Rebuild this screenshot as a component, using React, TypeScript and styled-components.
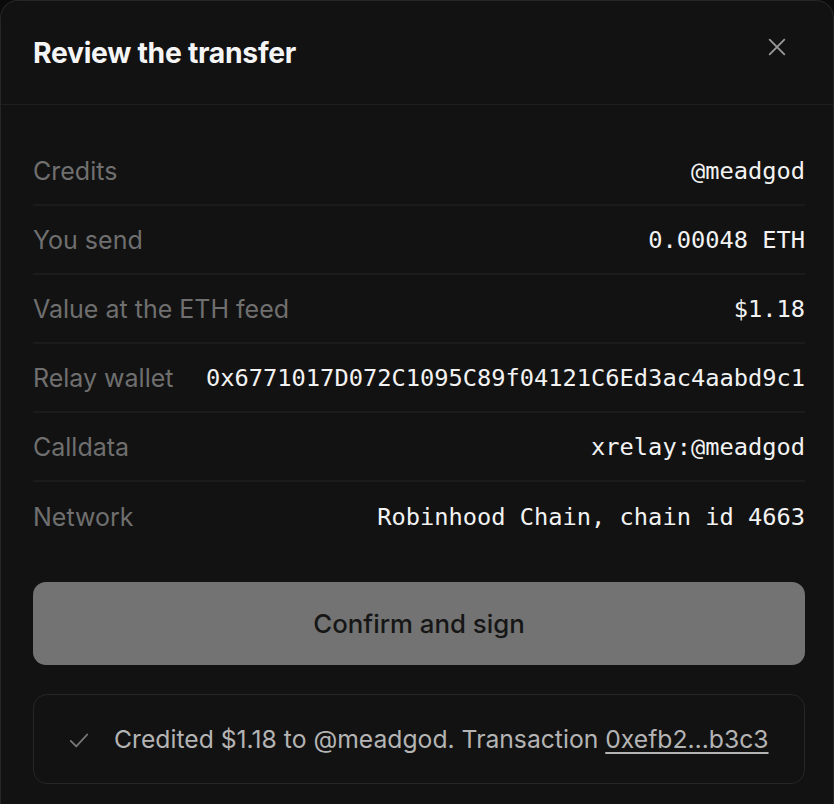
import React from 'react';
import styled, { createGlobalStyle } from 'styled-components';

const GlobalStyle = createGlobalStyle`
  html, body {
    margin: 0;
    padding: 0;
    background: #0b0b0b;
  }
  body {
    font-family: Inter, "Noto Sans", sans-serif;
  }
`;

const Modal = styled.div`
  box-sizing: border-box;
  width: 834px;
  height: 804px;
  background: #121212;
  border: 1px solid #262626;
  border-bottom: none;
  border-radius: 18px 18px 0 0;
  display: flex;
  flex-direction: column;
`;

const Header = styled.header`
  display: flex;
  align-items: center;
  justify-content: space-between;
  height: 103px;
  padding: 0 44px 0 32px;
  border-bottom: 1px solid #1f1f1f;
  flex-shrink: 0;
`;

const Title = styled.h2`
  margin: 0;
  font-size: 28.3px;
  font-weight: 700;
  letter-spacing: -0.01em;
  color: #f5f5f5;
`;

const CloseButton = styled.button`
  background: none;
  border: none;
  padding: 0;
  width: 24px;
  height: 24px;
  display: flex;
  align-items: center;
  justify-content: center;
  color: #9a9a9a;
  cursor: pointer;
  margin-top: -11px;
`;

const Body = styled.div`
  padding: 32px 28px 0 32px;
  display: flex;
  flex-direction: column;
`;

const Rows = styled.dl`
  margin: 0;
  display: flex;
  flex-direction: column;
`;

const Row = styled.div<{ $last?: boolean }>`
  display: flex;
  align-items: center;
  justify-content: space-between;
  gap: 24px;
  height: 69px;
  border-bottom: ${(p) => (p.$last ? 'none' : '2px solid #1b1b1b')};
  box-sizing: border-box;
`;

const Label = styled.dt`
  font-size: 25px;
  color: #6f6f6f;
  white-space: nowrap;
`;

const Value = styled.dd`
  margin: 0;
  font-family: "DejaVu Sans Mono", "Liberation Mono", monospace;
  font-size: 23.7px;
  color: #f2f2f2;
  white-space: nowrap;
  text-align: right;
`;

const ConfirmButton = styled.button`
  margin-top: 31px;
  height: 83px;
  border: none;
  border-radius: 13px;
  background: #737373;
  color: #161616;
  font-family: Inter, "Noto Sans", sans-serif;
  font-size: 25.8px;
  font-weight: 500;
  cursor: pointer;
`;

const Status = styled.div`
  margin-top: 29px;
  height: 90px;
  box-sizing: border-box;
  border: 1px solid #262626;
  border-radius: 14px;
  display: flex;
  align-items: center;
  gap: 24px;
  padding: 0 0 0 34px;
  color: #b4b4b4;
  font-size: 24.7px;
`;

const CheckIcon = styled.svg`
  flex-shrink: 0;
  color: #777;
  margin-top: 2px;
`;

const TxLink = styled.a`
  color: #b4b4b4;
  text-decoration: underline;
  text-underline-offset: 4px;
`;

const rows: [string, string][] = [
  ['Credits', '@meadgod'],
  ['You send', '0.00048 ETH'],
  ['Value at the ETH feed', '$1.18'],
  ['Relay wallet', '0x6771017D072C1095C89f04121C6Ed3ac4aabd9c1'],
  ['Calldata', 'xrelay:@meadgod'],
  ['Network', 'Robinhood Chain, chain id 4663'],
];

export default function App() {
  return (
    <>
      <GlobalStyle />
      <Modal>
        <Header>
          <Title>Review the transfer</Title>
          <CloseButton aria-label="Close">
            <svg width="22" height="22" viewBox="0 0 24 24" fill="none" stroke="currentColor" strokeWidth="2" strokeLinecap="round">
              <path d="M4 4l16 16M20 4L4 20" />
            </svg>
          </CloseButton>
        </Header>
        <Body>
          <Rows>
            {rows.map(([label, value], i) => (
              <Row key={label} $last={i === rows.length - 1}>
                <Label>{label}</Label>
                <Value>{value}</Value>
              </Row>
            ))}
          </Rows>
          <ConfirmButton>Confirm and sign</ConfirmButton>
          <Status>
            <CheckIcon width="22" height="22" viewBox="0 0 24 24" fill="none" stroke="currentColor" strokeWidth="2" strokeLinecap="round" strokeLinejoin="round">
              <path d="M3 13l6 6L21 6" />
            </CheckIcon>
            <span>
              Credited $1.18 to @meadgod. Transaction <TxLink href="#">0xefb2…b3c3</TxLink>
            </span>
          </Status>
        </Body>
      </Modal>
    </>
  );
}
